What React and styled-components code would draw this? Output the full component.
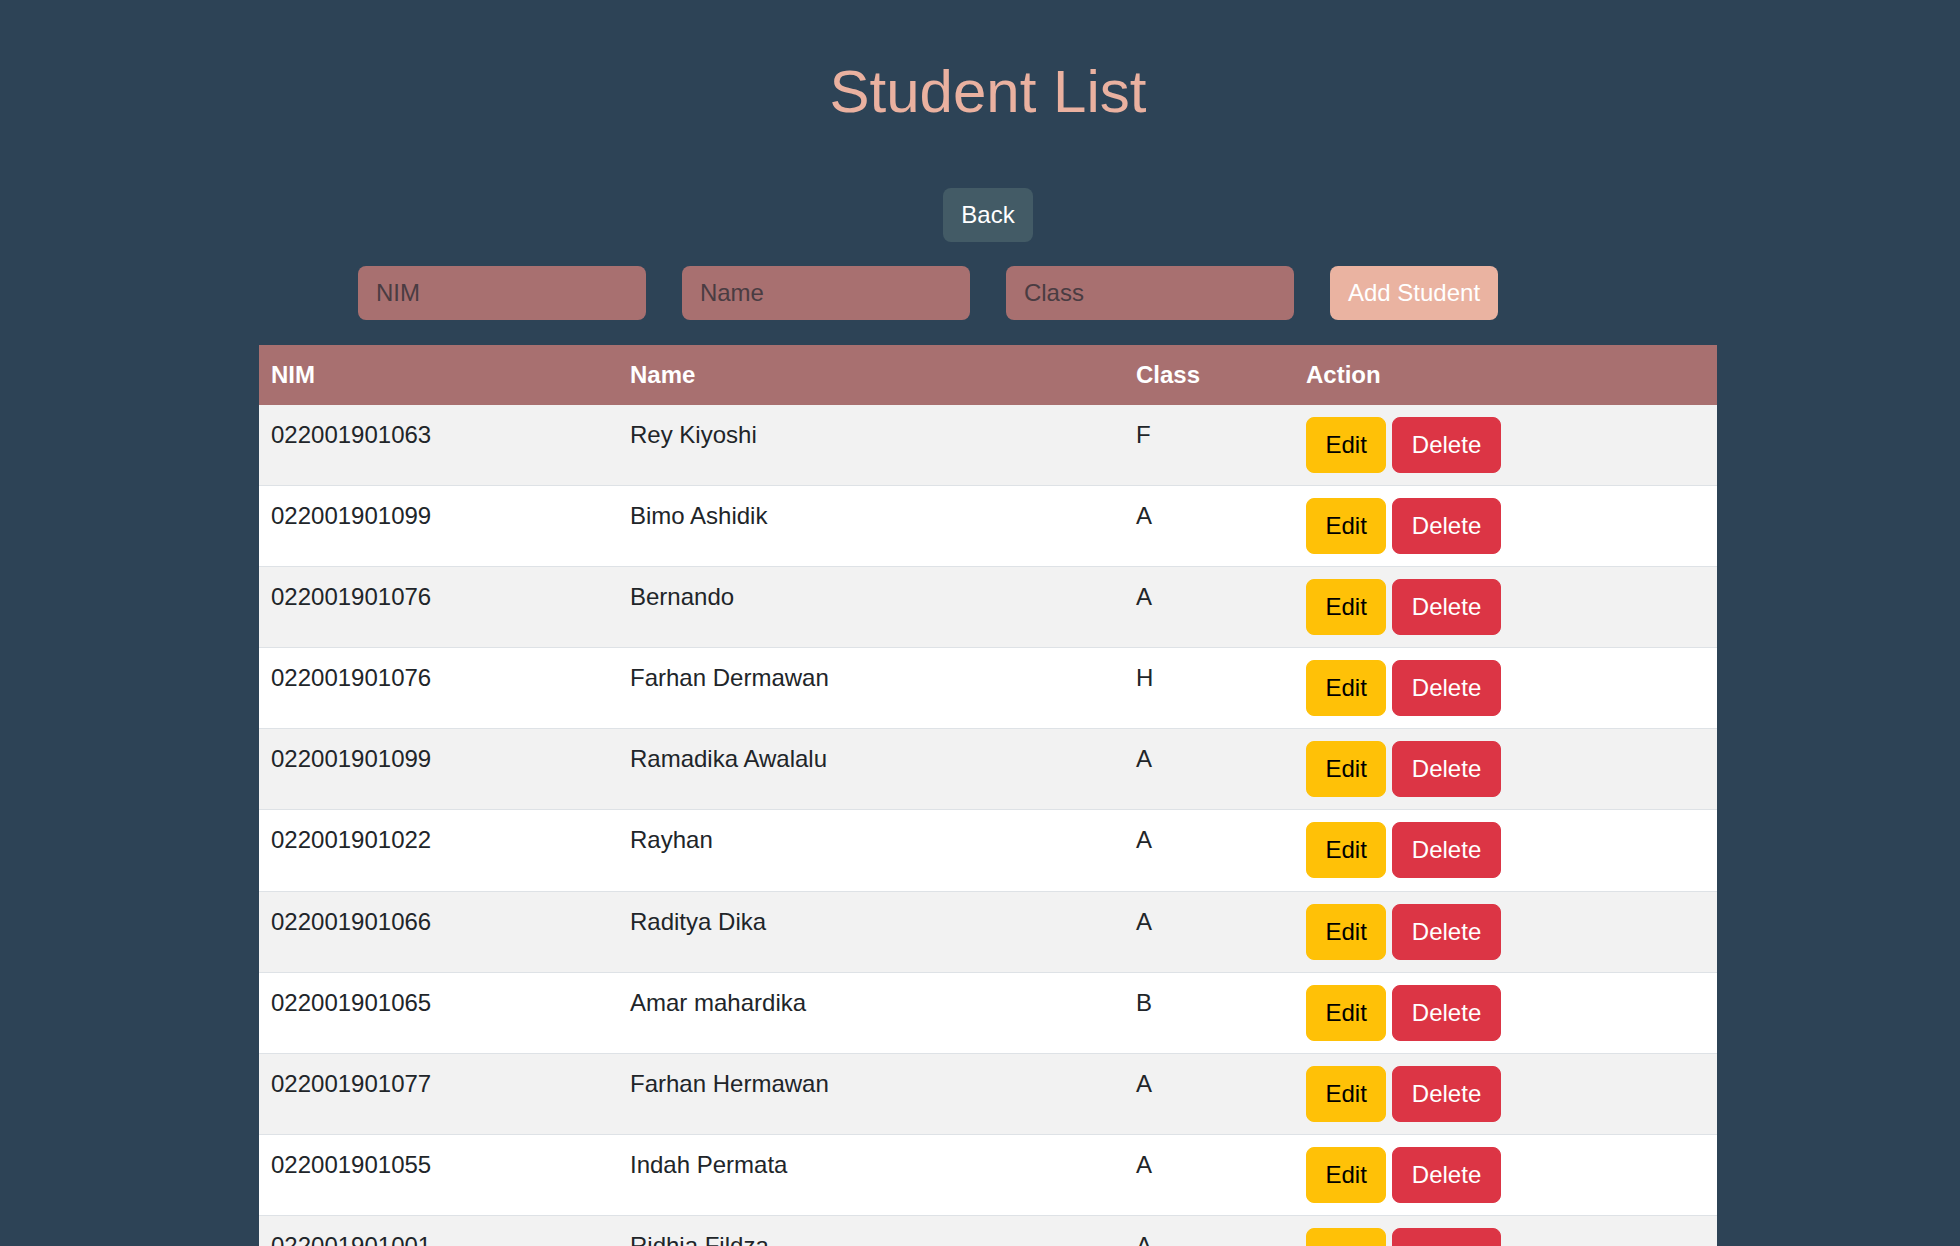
import React from "react";
import styled, { createGlobalStyle } from "styled-components";

const GlobalStyle = createGlobalStyle`
  html, body {
    margin: 0;
    padding: 0;
    background-color: #2d4356;
    font-family: "Liberation Sans", Arial, sans-serif;
  }
`;

const Page = styled.div`
  display: flex;
  flex-direction: column;
  align-items: center;
  padding: 58px 0 0 16px;
  min-height: 1246px;
  box-sizing: border-box;
`;

const Title = styled.h1`
  margin: 0 0 63px;
  font-size: 60px;
  font-weight: normal;
  line-height: 67px;
  color: #eab1a0;
`;

const BackButton = styled.button`
  height: 54px;
  padding: 0 18px;
  margin-bottom: 24px;
  font-family: inherit;
  font-size: 24px;
  color: #ffffff;
  background-color: #435b66;
  border: none;
  border-radius: 8px;
  cursor: pointer;
`;

const Form = styled.div`
  display: flex;
  gap: 36px;
  padding-right: 120px;
  margin-bottom: 25px;
`;

const Field = styled.input`
  width: 288px;
  height: 54px;
  padding: 0 18px;
  box-sizing: border-box;
  font-family: inherit;
  font-size: 24px;
  color: #2b2b2b;
  background-color: #a87070;
  border: none;
  border-radius: 8px;
  &::placeholder {
    color: #4a3c42;
  }
  &:focus {
    outline: none;
  }
`;

const AddButton = styled.button`
  height: 54px;
  padding: 0 18px;
  font-family: inherit;
  font-size: 24px;
  color: #ffffff;
  background-color: #eab3a1;
  border: none;
  border-radius: 8px;
  cursor: pointer;
`;

const Table = styled.table`
  width: 1458px;
  border-collapse: collapse;
  table-layout: fixed;
  font-size: 24px;
`;

const HeadCell = styled.th`
  padding: 12px 12px;
  line-height: 36px;
  text-align: left;
  font-weight: bold;
  color: #ffffff;
  background-color: #a87070;
`;

const Row = styled.tr`
  background-color: ${(p) => (p.$odd ? "#f2f2f2" : "#ffffff")};
  border-bottom: 1px solid #dee2e6;
`;

const Cell = styled.td`
  padding: 12px 12px 12.1px;
  line-height: 36px;
  vertical-align: top;
  color: #212529;
`;

const Actions = styled.div`
  display: flex;
  gap: 6px;
`;

const ActionButton = styled.button`
  padding: 9px 18.5px;
  font-family: inherit;
  font-size: 24px;
  line-height: 36px;
  color: ${(p) => (p.$danger ? "#ffffff" : "#000000")};
  background-color: ${(p) => (p.$danger ? "#dc3545" : "#ffc107")};
  border: 1px solid ${(p) => (p.$danger ? "#dc3545" : "#ffc107")};
  border-radius: 8px;
  cursor: pointer;
`;

const students = [
  { nim: "022001901063", name: "Rey Kiyoshi", kelas: "F" },
  { nim: "022001901099", name: "Bimo Ashidik", kelas: "A" },
  { nim: "022001901076", name: "Bernando", kelas: "A" },
  { nim: "022001901076", name: "Farhan Dermawan", kelas: "H" },
  { nim: "022001901099", name: "Ramadika Awalalu", kelas: "A" },
  { nim: "022001901022", name: "Rayhan", kelas: "A" },
  { nim: "022001901066", name: "Raditya Dika", kelas: "A" },
  { nim: "022001901065", name: "Amar mahardika", kelas: "B" },
  { nim: "022001901077", name: "Farhan Hermawan", kelas: "A" },
  { nim: "022001901055", name: "Indah Permata", kelas: "A" },
  { nim: "022001901001", name: "Ridhia Fildza", kelas: "A" },
];

const App = () => {
  return (
    <>
      <GlobalStyle />
      <Page>
        <Title>Student List</Title>
        <BackButton>Back</BackButton>
        <Form>
          <Field type="text" placeholder="NIM" />
          <Field type="text" placeholder="Name" />
          <Field type="text" placeholder="Class" />
          <AddButton>Add Student</AddButton>
        </Form>
        <Table>
          <colgroup>
            <col style={{ width: 359 }} />
            <col style={{ width: 506 }} />
            <col style={{ width: 170 }} />
            <col />
          </colgroup>
          <thead>
            <tr>
              <HeadCell>NIM</HeadCell>
              <HeadCell>Name</HeadCell>
              <HeadCell>Class</HeadCell>
              <HeadCell>Action</HeadCell>
            </tr>
          </thead>
          <tbody>
            {students.map((s, i) => (
              <Row key={i} $odd={i % 2 === 0}>
                <Cell>{s.nim}</Cell>
                <Cell>{s.name}</Cell>
                <Cell>{s.kelas}</Cell>
                <Cell>
                  <Actions>
                    <ActionButton>Edit</ActionButton>
                    <ActionButton $danger>Delete</ActionButton>
                  </Actions>
                </Cell>
              </Row>
            ))}
          </tbody>
        </Table>
      </Page>
    </>
  );
};

export default App;
